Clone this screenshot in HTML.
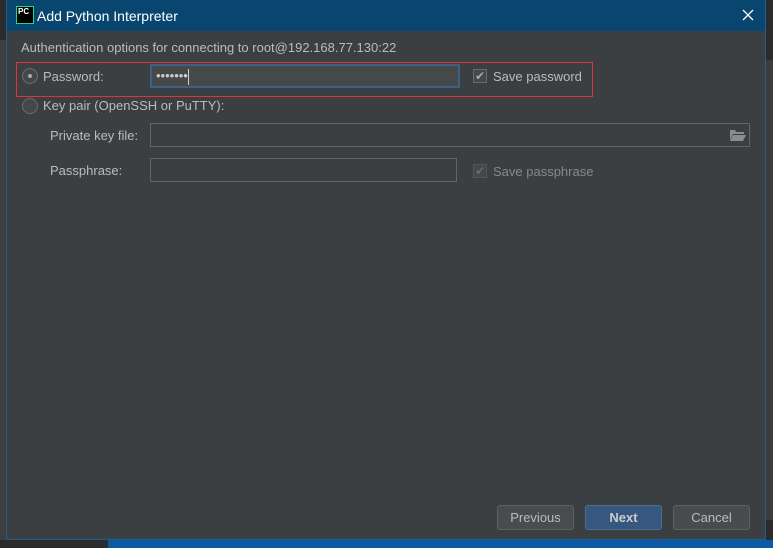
<!DOCTYPE html>
<html><head><style>
body{margin:0;width:773px;height:548px;background:#2b2b2b;position:relative;overflow:hidden;font-family:"Liberation Sans","Noto Sans CJK SC",sans-serif;font-size:13px;color:#bbbbbb}
.a{position:absolute}
#dlg{left:6px;top:0;width:758px;height:539px;background:#3c3f41;border:1px solid #1f5f8f;border-top:none}
#title{left:0;top:0;width:758px;height:31px;background:#08466f;color:#fff;font-size:14px}
.inp{background:#45494a;border:1px solid #646464;height:22px}
.btn{border:1px solid #5e6060;background:#494c4e;border-radius:3px;height:23px;text-align:center;line-height:23px;color:#bbbbbb}
.cb{width:12px;height:12px;border:1px solid #6b6b6b;background:#43494a;font-size:12px;line-height:12px;text-align:center;color:#a9a9a9}
.rad{width:14px;height:14px;border-radius:50%;border:1px solid #6b6b6b;background:#43494a}
</style></head><body>
<div class="a" style="left:0;top:40px;width:6px;height:500px;background:#3c3f41"></div>
<div class="a" style="left:765px;top:60px;width:8px;height:460px;background:#3a3d3f"></div>
<div class="a" style="left:108px;top:540px;width:665px;height:8px;background:#0b5aa6"></div>
<div id="dlg" class="a">
 <div id="title" class="a">
  <div class="a" style="left:9px;top:6px;width:15px;height:16px;background:#000;border:1px solid #21d789;color:#fff;font-size:8px;font-weight:bold;line-height:9px;padding-left:1px">PC</div>
  <div class="a" style="left:30px;top:8px">Add Python Interpreter</div>
  <svg class="a" style="left:735px;top:9px" width="12" height="12"><path d="M1 1L11 11M11 1L1 11" stroke="#fff" stroke-width="1.3"/></svg>
 </div>
 <div class="a" style="left:14px;top:40px">Authentication options for connecting to root@192.168.77.130:22</div>
 <div class="a" style="left:9px;top:62px;width:575px;height:33px;border:1px solid #e0343a"></div>
 <div class="a rad" style="left:15px;top:68px"><div class="a" style="left:5px;top:5px;width:4px;height:4px;border-radius:50%;background:#aaa"></div></div>
 <div class="a" style="left:36px;top:69px">Password:</div>
 <div class="a inp" style="left:143px;top:64px;height:20px;border:2px solid #3d6185;color:#ccc;line-height:20px;padding-left:4px;width:302px">•••••••<span style="display:inline-block;width:1px;height:16px;background:#ccc;vertical-align:middle"></span></div>
 <div class="a cb" style="left:466px;top:69px">✔</div>
 <div class="a" style="left:486px;top:69px">Save password</div>
 <div class="a rad" style="left:15px;top:98px"></div>
 <div class="a" style="left:36px;top:98px">Key pair (OpenSSH or PuTTY):</div>
 <div class="a" style="left:43px;top:128px">Private key file:</div>
 <div class="a inp" style="left:143px;top:123px;width:598px;background:#3c3f41"></div>
 <svg class="a" style="left:723px;top:129px" width="16" height="12"><path d="M0 1h5l1 2h8v2H3L0 11z M3 6h13l-3 6H0z" fill="#8a8d8e"/></svg>
 <div class="a" style="left:43px;top:163px">Passphrase:</div>
 <div class="a inp" style="left:143px;top:158px;width:305px;background:#3c3f41"></div>
 <div class="a cb" style="left:466px;top:164px;color:#6b6b6b;border-color:#555">✔</div>
 <div class="a" style="left:486px;top:164px;color:#888">Save passphrase</div>
 <div class="a btn" style="left:490px;top:505px;width:75px">Previous</div>
 <div class="a btn" style="left:578px;top:505px;width:75px;background:#365880;border-color:#4c708c;color:#ccc;font-weight:bold">Next</div>
 <div class="a btn" style="left:666px;top:505px;width:75px">Cancel</div>
</div>
</body></html>
